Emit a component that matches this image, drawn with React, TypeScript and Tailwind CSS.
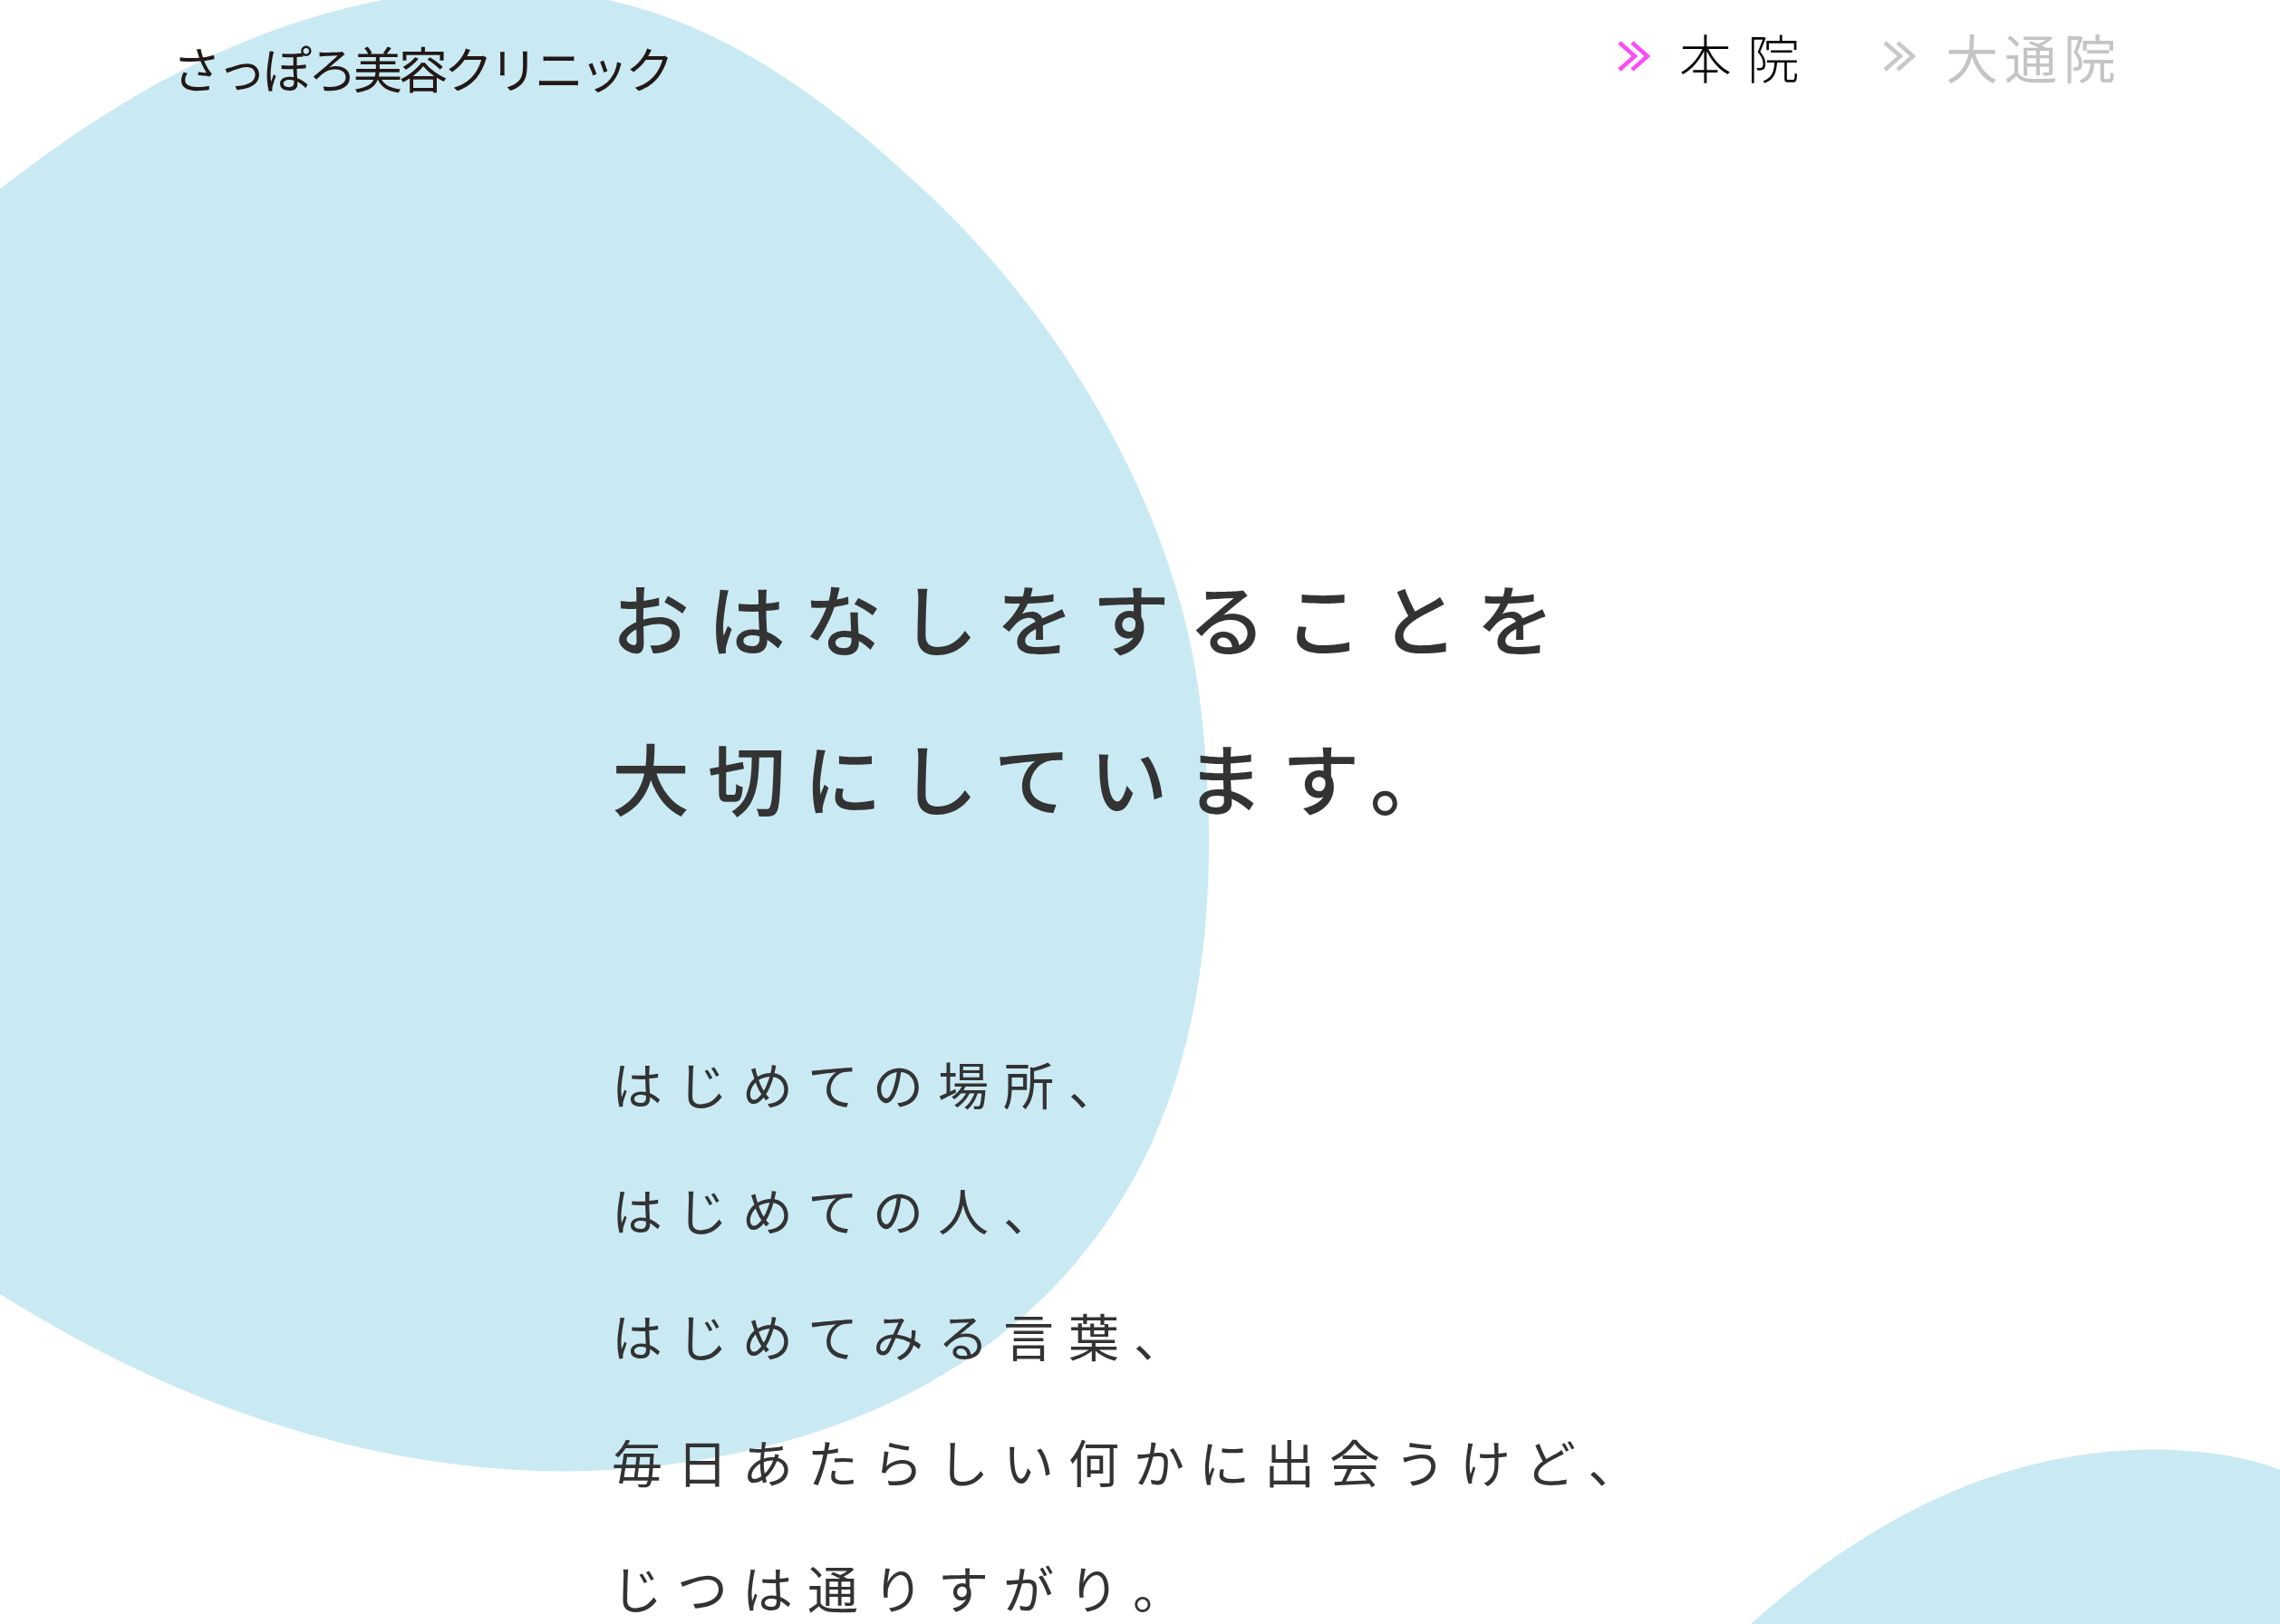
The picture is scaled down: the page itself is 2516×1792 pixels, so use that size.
import React from "react";

const Chevrons = ({ color }: { color: string }) => (
  <svg width="38" height="34" viewBox="0 0 38 34" fill="none" aria-hidden="true">
    <polyline points="3,2 20,17 3,32" stroke={color} strokeWidth="4.5" />
    <polyline points="17,2 34,17 17,32" stroke={color} strokeWidth="4.5" />
  </svg>
);

const bodyLines = [
  "はじめての場所、",
  "はじめての人、",
  "はじめてみる言葉、",
  "毎日あたらしい何かに出会うけど、",
  "じつは通りすがり。",
];

export default function App() {
  return (
    <div className="relative min-h-screen w-full overflow-hidden bg-white font-['Noto_Sans_CJK_JP','Noto_Sans',sans-serif]">
      {/* background blobs */}
      <svg
        className="pointer-events-none absolute inset-0 h-[1792px] w-full"
        viewBox="0 0 1568 1117"
        preserveAspectRatio="none"
        aria-hidden="true"
      >
        <path
          d="M 0 130 C 90 60, 200 -5, 340 -8 C 470 -10, 560 60, 640 135 C 740 230, 810 360, 825 480 C 840 600, 830 720, 780 810 C 720 920, 600 1000, 420 1011 C 260 1020, 110 960, 0 890 Z"
          fill="#c9eaf3"
        />
        <path
          d="M 1204 1117 C 1290 1040, 1380 998, 1478 997 C 1515 997, 1545 1002, 1568 1011 L 1568 1117 Z"
          fill="#c9eaf3"
        />
      </svg>

      {/* header */}
      <header className="relative flex items-start justify-between pl-[190px] pr-[174px] pt-[33px]">
        <div className="mt-[15px] text-[54px] leading-none tracking-[-4px] text-[#231815]">
          さっぽろ美容クリニック
        </div>
        <nav className="flex items-center gap-[74px]">
          <a className="flex items-center gap-[31px]">
            <Chevrons color="#fb4cf5" />
            <span className="text-[58px] font-light leading-none tracking-[17px] text-black">本院</span>
          </a>
          <a className="flex items-center gap-[32px]">
            <Chevrons color="#c8c8c8" />
            <span className="text-[58px] leading-none tracking-[7px] text-[#c4c4c4]">大通院</span>
          </a>
        </nav>
      </header>

      {/* message */}
      <main className="relative pl-[675px]">
        <h1 className="mt-[491px] text-[86px] font-medium leading-[176px] tracking-[20px] text-[#333333]">
          おはなしをすることを
          <br />
          大切にしています。
        </h1>
        <div className="mt-[180px] text-[56px] leading-[139px] tracking-[16px] text-[#333333]">
          {bodyLines.map((line) => (
            <p key={line}>{line}</p>
          ))}
        </div>
      </main>
    </div>
  );
}
